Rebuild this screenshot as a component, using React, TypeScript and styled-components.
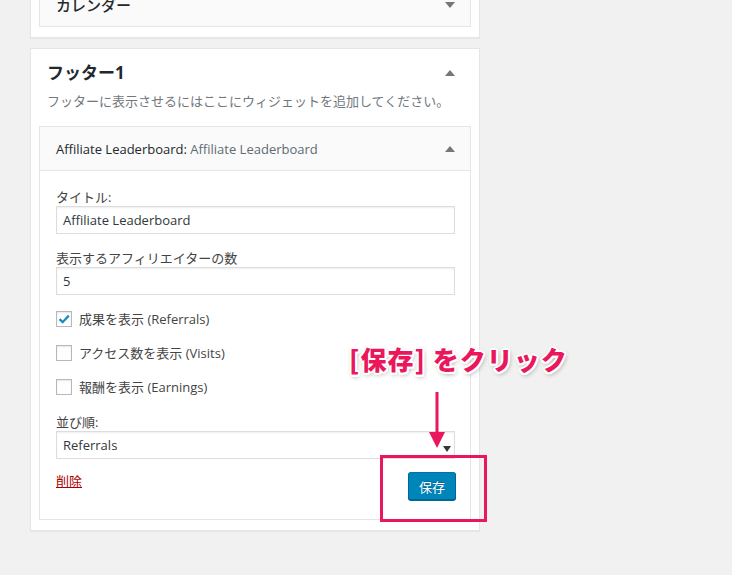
import React from 'react';
import styled, { createGlobalStyle } from 'styled-components';

const GlobalStyle = createGlobalStyle`
  * { box-sizing: border-box; }
  body {
    margin: 0;
    background: #f1f1f1;
    font-family: "Open Sans", "Noto Sans CJK JP", sans-serif;
    font-size: 13px;
    color: #444;
  }
`;

const PINK = '#ea175c';

const Page = styled.div`
  position: relative;
  height: 575px;
  overflow: hidden;
`;

const Column = styled.div`
  width: 450px;
  margin-left: 30px;
`;

const Card = styled.div<{ $top?: boolean }>`
  background: #fff;
  border: 1px solid #e5e5e5;
  box-shadow: 0 1px 1px rgba(0, 0, 0, 0.04);
  margin-top: ${p => (p.$top ? '-26px' : '10px')};
  padding: ${p => (p.$top ? '7px 8px 10px' : '0 0 10px')};
`;

const CardHead = styled.div`
  display: flex;
  align-items: center;
  justify-content: space-between;
  padding: 12px 24px 0 16px;
`;

const CardTitle = styled.h2`
  margin: 0;
  font-size: 17px;
  line-height: 24px;
  font-weight: 700;
  color: #23282d;
`;

const CardDesc = styled.p`
  margin: 7px 16px 16px;
  line-height: 18px;
  color: #72777c;
`;

const Widget = styled.div<{ $inset?: boolean }>`
  border: 1px solid #e5e5e5;
  background: #fff;
  margin: ${p => (p.$inset ? '0 8px' : '0')};
`;

const WidgetTop = styled.div<{ $open?: boolean }>`
  height: ${p => (p.$open ? '44px' : '43px')};
  background: #fafafa;
  border-bottom: ${p => (p.$open ? '1px solid #e5e5e5' : 'none')};
  display: flex;
  align-items: center;
  justify-content: space-between;
  padding: 0 15px 0 16px;
`;

const WidgetTitle = styled.h3`
  margin: 0;
  font-size: 13px;
  font-weight: 500;
  color: #23282d;
`;

const BigWidgetTitle = styled(WidgetTitle)`
  font-size: 15px;
`;

const InTitle = styled.span`
  font-weight: 400;
  color: #606a73;
`;

const WidgetBody = styled.div`
  padding: 18px 15px 19px 16px;
  display: flex;
  flex-direction: column;
`;

const Field = styled.div<{ $gap?: number }>`
  margin-top: ${p => p.$gap ?? 0}px;
`;

const Label = styled.label`
  display: block;
  line-height: 17px;
  color: #444;
`;

const TextInput = styled.div`
  height: 28px;
  border: 1px solid #ddd;
  box-shadow: inset 0 1px 2px rgba(0, 0, 0, 0.07);
  padding: 0 6px;
  display: flex;
  align-items: center;
  color: #32373c;
  font-size: 13px;
`;

const Select = styled(TextInput)`
  position: relative;
`;

const SelectArrow = styled.svg`
  position: absolute;
  right: 3px;
  top: 14px;
`;

const Checks = styled.div`
  margin-top: 16px;
  display: flex;
  flex-direction: column;
  gap: 18px;
`;

const CheckRow = styled.div`
  display: flex;
  align-items: center;
  gap: 7px;
  height: 16px;
  line-height: 16px;
`;

const Box = styled.span`
  width: 16px;
  height: 16px;
  border: 1px solid #b4b9be;
  background: #fff;
  box-shadow: inset 0 1px 2px rgba(0, 0, 0, 0.1);
  display: flex;
  align-items: center;
  justify-content: center;
`;

const Footer = styled.div`
  margin-top: 13px;
  display: flex;
  align-items: flex-start;
  justify-content: space-between;
`;

const DeleteLink = styled.a`
  margin-top: 1px;
  line-height: 17px;
  color: #a00;
  text-decoration: underline;
  font-size: 13px;
`;

const SaveButton = styled.button`
  width: 48px;
  height: 28px;
  margin-right: -1px;
  background: #0085ba;
  border: 1px solid #0073aa;
  border-color: #0073aa #006799 #006799;
  border-radius: 3px;
  box-shadow: 0 1px 0 #006799;
  color: #fff;
  font-family: "Open Sans", "Noto Sans CJK JP", sans-serif;
  font-size: 13px;
  text-shadow: 0 -1px 1px #006799;
  padding: 0;
`;

const Annotation = styled.div`
  position: absolute;
  left: 349px;
  top: 341px;
  font-family: "Noto Sans CJK JP", sans-serif;
  font-weight: 900;
  font-size: 26px;
  letter-spacing: 1px;
  line-height: 36px;
  color: ${PINK};
  text-shadow:
    2px 0 0 #fff, -2px 0 0 #fff, 0 2px 0 #fff, 0 -2px 0 #fff,
    1.5px 1.5px 0 #fff, -1.5px 1.5px 0 #fff, 1.5px -1.5px 0 #fff, -1.5px -1.5px 0 #fff,
    1px 2px 5px rgba(0, 0, 0, 0.45);
  white-space: nowrap;
`;

const Pointer = styled.svg`
  position: absolute;
  left: 429px;
  top: 392px;
`;

const Highlight = styled.div`
  position: absolute;
  left: 380px;
  top: 455px;
  width: 107px;
  height: 67px;
  border: 3px solid ${PINK};
`;

const Caret = ({ up }: { up?: boolean }) => (
  <svg width="10" height="6" viewBox="0 0 10 6">
    <path d={up ? 'M5 0 L10 6 L0 6 Z' : 'M0 0 L10 0 L5 6 Z'} fill="#72777c" />
  </svg>
);

const Check = ({ checked, text }: { checked?: boolean; text: string }) => (
  <CheckRow>
    <Box>
      {checked && (
        <svg width="14" height="14" viewBox="0 0 14 14">
          <path d="M2.5 7.2 L5.6 10.2 L11.8 3.6" fill="none" stroke="#1e8cbe" strokeWidth="2.3" />
        </svg>
      )}
    </Box>
    <span>{text}</span>
  </CheckRow>
);

export default function App() {
  return (
    <Page>
      <GlobalStyle />
      <Column>
        <Card $top>
          <Widget>
            <WidgetTop>
              <BigWidgetTitle>カレンダー</BigWidgetTitle>
              <Caret />
            </WidgetTop>
          </Widget>
        </Card>

        <Card>
          <CardHead>
            <CardTitle>フッター1</CardTitle>
            <Caret up />
          </CardHead>
          <CardDesc>フッターに表示させるにはここにウィジェットを追加してください。</CardDesc>

          <Widget $inset>
            <WidgetTop $open>
              <WidgetTitle>
                Affiliate Leaderboard: <InTitle>Affiliate Leaderboard</InTitle>
              </WidgetTitle>
              <Caret up />
            </WidgetTop>
            <WidgetBody>
              <Field>
                <Label>タイトル:</Label>
                <TextInput>Affiliate Leaderboard</TextInput>
              </Field>
              <Field $gap={16}>
                <Label>表示するアフィリエイターの数</Label>
                <TextInput>5</TextInput>
              </Field>
              <Checks>
                <Check checked text="成果を表示 (Referrals)" />
                <Check text="アクセス数を表示 (Visits)" />
                <Check text="報酬を表示 (Earnings)" />
              </Checks>
              <Field $gap={19}>
                <Label>並び順:</Label>
                <Select>
                  Referrals
                  <SelectArrow width="8" height="6" viewBox="0 0 8 6">
                    <path d="M0 0 L8 0 L4 6 Z" fill="#32373c" />
                  </SelectArrow>
                </Select>
              </Field>
              <Footer>
                <DeleteLink>削除</DeleteLink>
                <SaveButton>保存</SaveButton>
              </Footer>
            </WidgetBody>
          </Widget>
        </Card>
      </Column>

      <Annotation>[保存] をクリック</Annotation>
      <Pointer width="16" height="57" viewBox="0 0 16 57">
        <rect x="6.5" y="0" width="3" height="42" fill={PINK} />
        <path d="M0 40 L16 40 L8 56 Z" fill={PINK} />
      </Pointer>
      <Highlight />
    </Page>
  );
}
